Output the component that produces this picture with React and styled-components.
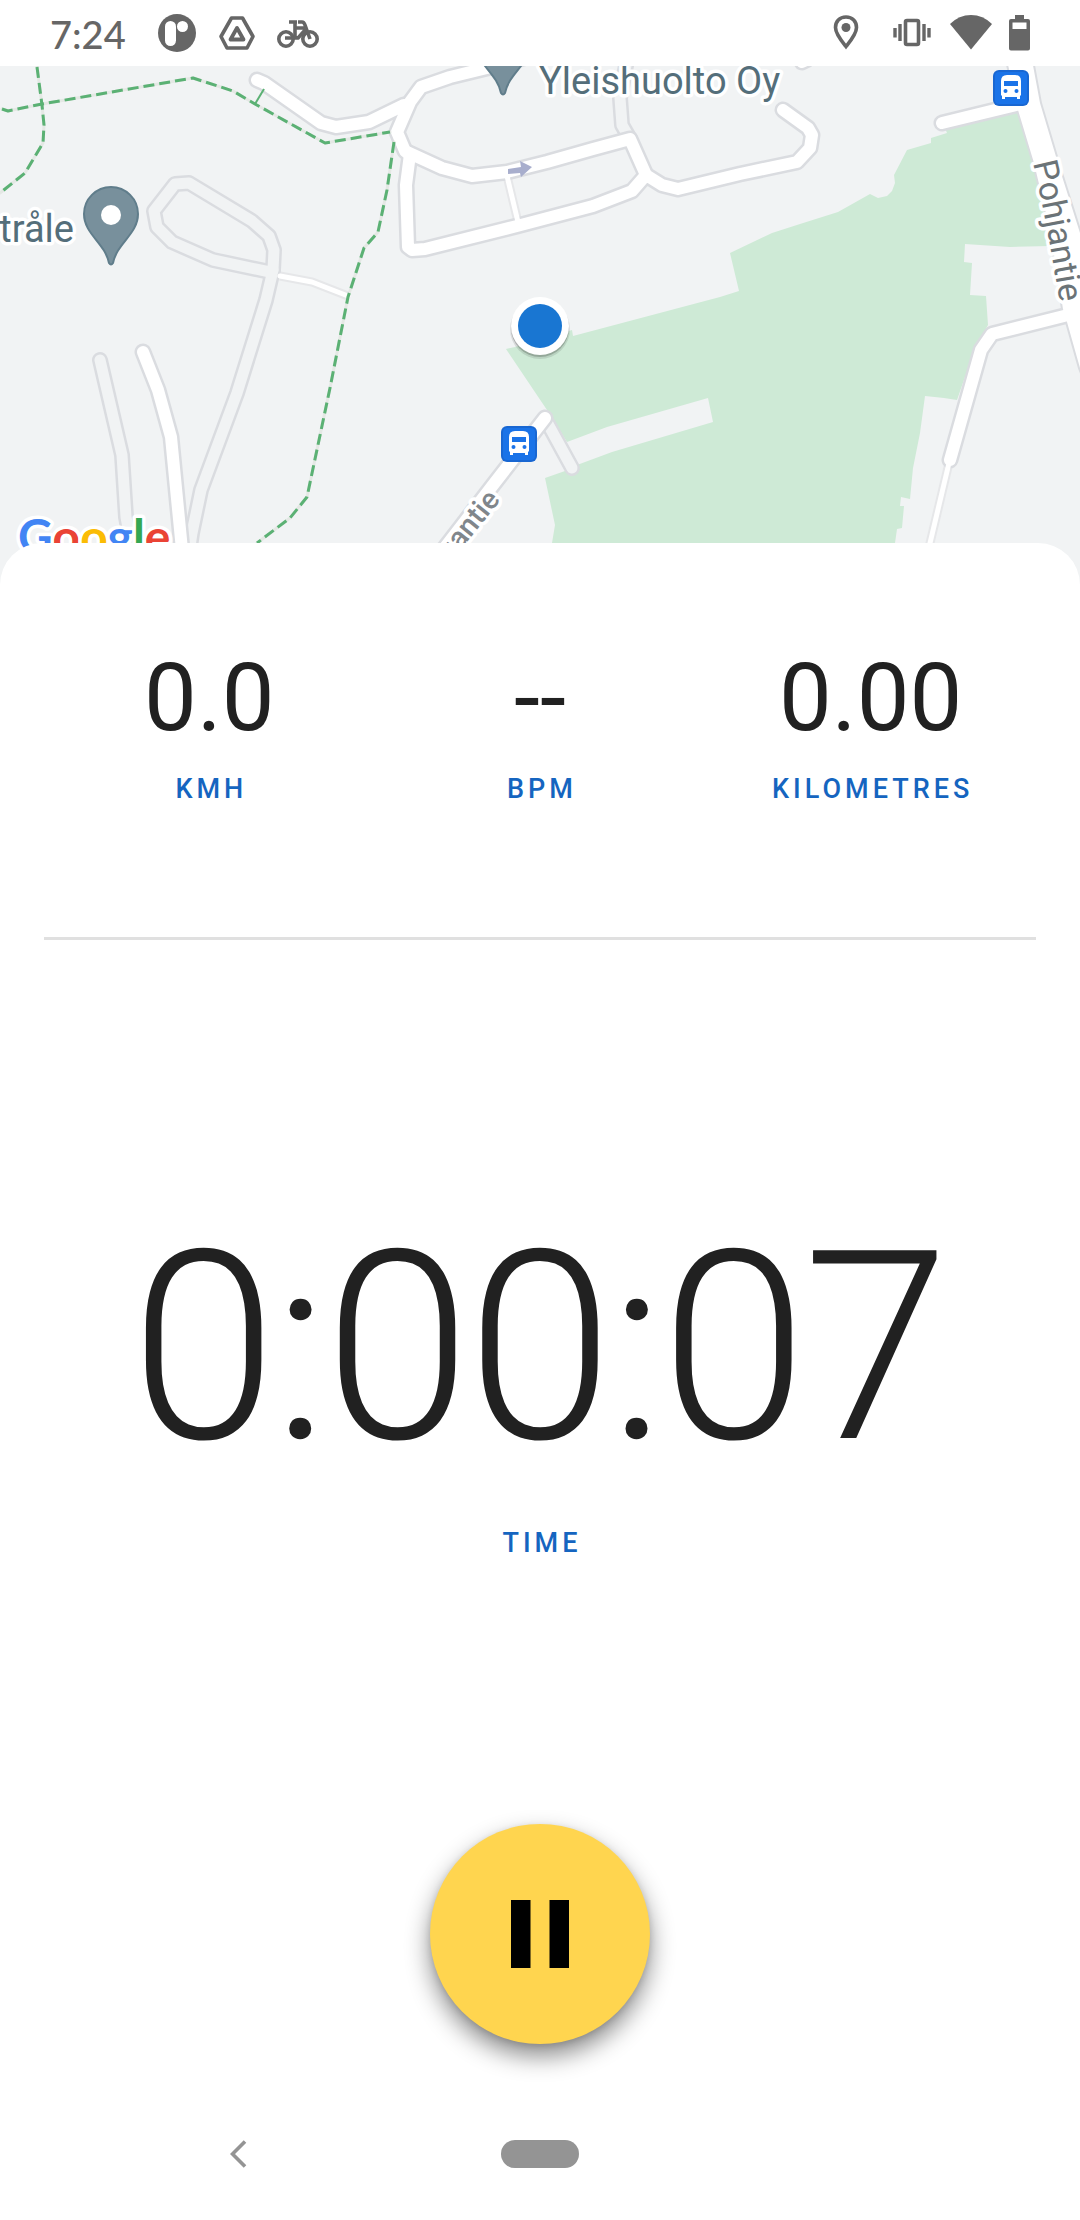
import React from "react";
import styled, { createGlobalStyle } from "styled-components";

const GlobalStyle = createGlobalStyle`
  *, *::before, *::after { box-sizing: border-box; }
  html, body { margin: 0; padding: 0; background: #fff; }
  body { font-family: Roboto, "Liberation Sans", sans-serif; }
`;

const Screen = styled.div`
  display: flex;
  flex-direction: column;
  min-height: 100vh;
  overflow-x: hidden;
`;

/* ---------- status bar ---------- */

const StatusBar = styled.header`
  display: flex;
  align-items: center;
  justify-content: space-between;
  height: 66px;
  padding: 0 50px;
  color: #666;
`;

const StatusGroup = styled.div`
  display: flex;
  align-items: center;
  gap: ${(p) => p.$gap}px;
`;

const Clock = styled.time`
  margin-right: 10px;
  padding-top: 2px;
  font-family: Lato, Roboto, sans-serif;
  font-size: 38px;
  line-height: 46px;
  font-weight: 500;
`;

const StatusIcon = styled.svg`
  display: block;
  width: ${(p) => p.$w}px;
  height: 38px;
  flex: none;
  overflow: visible;
`;

/* ---------- map ---------- */

const MapArea = styled.section`
  height: 519px;
  background: #f1f3f4;
  overflow: hidden;
`;

const MapCanvas = styled.svg`
  display: block;
  width: 100%;
  height: 100%;
  font-family: Roboto, "Liberation Sans", sans-serif;
`;

/* ---------- sheet ---------- */

const Sheet = styled.main`
  position: relative;
  display: flex;
  flex-direction: column;
  flex: 1;
  margin-top: -42px;
  background: #fff;
  border-radius: 42px 42px 0 0;
`;

const Stats = styled.dl`
  display: grid;
  grid-template-columns: repeat(3, 1fr);
  margin: 0 44px;
  padding: 100px 0 132px;
  border-bottom: 3px solid #e0e0e0;
`;

const Metric = styled.div`
  display: flex;
  flex-direction: column-reverse;
  align-items: center;
  gap: 20px;
`;

const Label = styled.dt`
  padding-left: 4px;
  color: #1565c0;
  font-size: 27px;
  line-height: 32px;
  font-weight: 500;
  letter-spacing: 4px;
`;

const Value = styled.dd`
  margin: 0;
  color: #212121;
  font-size: 94px;
  line-height: 110px;
`;

const Timer = styled.dl`
  display: flex;
  flex-direction: column;
  justify-content: center;
  flex: 1;
  margin: 0;
  padding-bottom: 12px;
`;

const TimerMetric = styled(Metric)`
  gap: 24px;
`;

const TimerValue = styled(Value)`
  padding-right: 4px;
  font-size: 264px;
  line-height: 310px;
  font-weight: 300;
  letter-spacing: -4px;
`;

const Controls = styled.div`
  display: flex;
  justify-content: center;
  padding-bottom: 44px;
`;

const PauseButton = styled.button`
  display: grid;
  place-items: center;
  width: 220px;
  height: 220px;
  padding: 0;
  border: 0;
  border-radius: 50%;
  background: #ffd54f;
  color: #000;
  box-shadow: 0 12px 24px rgba(0, 0, 0, 0.46), 0 2px 6px rgba(0, 0, 0, 0.12);
  cursor: pointer;
`;

/* ---------- navigation bar ---------- */

const NavBar = styled.nav`
  display: grid;
  grid-template-columns: 1fr 78px 1fr;
  align-items: center;
  height: 132px;
  color: #949494;
`;

const NavButton = styled.button`
  display: grid;
  place-items: center;
  justify-self: center;
  height: 80px;
  padding: 0 24px;
  border: 0;
  background: none;
  color: inherit;
`;

const BackButton = styled(NavButton)`
  margin-right: 24px;
`;

const HomeButton = styled(NavButton)`
  width: 78px;
  height: 28px;
  border-radius: 14px;
  background: currentColor;
`;

/* ---------- map data ---------- */

const PARK =
  "506,349 515,347 572,330 573,336 720,297 739,291 730,253 772,233 800,224 838,212 870,194 878,198 887,196 892,191 895,183 894,175 907,150 931,143 931,138 947,133 945,128 1017,110 1034,163 1046,215 1050,246 1010,247 965,244 964,262 972,263 970,295 986,296 988,325 975,348 957,400 944,398 925,396 920,433 913,468 910,499 901,497 900,506 904,506 902,528 897,529 895,543 895,590 552,590 552,543 555,525 545,478 565,471 577,465 612,452 713,422 708,398 607,427 567,442 547,410";

const SERVICE_ROADS = [
  "627,60 620,98 622,125 630,139",
  "273,270 274,250 269,236 252,221 189,183 175,184 154,211 157,227 172,242 213,260 270,272",
  "273,270 266,300 237,393 201,490 192,533 188,560",
  "100,360 122,455 126,517 134,560",
  "548,424 572,468",
];

const STREETS = [
  "257,80 264,83 321,123 336,127 369,122 404,105",
  "527,57 487,68 450,77 421,87 410,102 397,132 405,151 412,156",
  "407,152 442,168 472,176 507,172 547,162 593,149 630,139 646,175",
  "410,154 406,185 408,247 412,250 425,249 517,226 593,206 632,191 646,175 662,185 678,189 740,174 797,162 810,148 812,135 808,128 783,110",
  "143,352 158,390 171,437 183,560",
  "545,418 493,485 440,554",
  "942,123 1020,104",
  "1068,315 992,334 981,350 950,460",
  "806,60 802,62",
];

const PATHS = ["507,176 518,222", "280,276 312,282 348,296", "949,463 926,560"];

const TRAILS = [
  "37,67 42,105 44,125 43,143 25,173 0,193",
  "2,109 8,111 42,104 193,78 233,91 255,104 325,143 390,132",
  "394,142 387,190 378,232 364,248 348,297 330,388 307,497 290,518 257,543",
];

const AVENUE =
  "1007,60 1018,110 1034,163 1050,230 1063,309 1067,322 1080,368 1100,420 1100,290 1080,233 1060,170 1040,103 1032,60";

function Polylines({ lines, stroke, width, cap = "round", dash }) {
  return (
    <g
      fill="none"
      stroke={stroke}
      strokeWidth={width}
      strokeLinecap={cap}
      strokeLinejoin="round"
      strokeDasharray={dash}
    >
      {lines.map((points) => (
        <polyline key={points} points={points} />
      ))}
    </g>
  );
}

function PlacePin({ x, y }) {
  return (
    <g transform={`translate(${x} ${y})`}>
      <path
        d="M0-51a27 27 0 0 1 27 27C27-4 6 5 2 25q-2 3-4 0C-6 5-27-4-27-24A27 27 0 0 1 0-51Z"
        transform="translate(0 -1)"
        fill="#78909c"
        stroke="#607d8b"
        strokeWidth="2"
      />
      <circle cy="-24" r="10" fill="#fff" />
    </g>
  );
}

function BusStop({ x, y }) {
  return (
    <g transform={`translate(${x} ${y})`}>
      <rect width="36" height="36" rx="6" fill="#1967d2" />
      <rect x="2" y="2" width="32" height="32" rx="4" fill="#1a73e8" />
      <path
        d="M8 11q0-6 6-6h8q6 0 6 6v14l-1 1v3h-3v-2H12v2H9v-3l-1-1Z"
        fill="#fff"
      />
      <rect x="11" y="11" width="14" height="5" fill="#1a73e8" />
      <circle cx="12.500" cy="21" r="2" fill="#1a73e8" />
      <circle cx="23.500" cy="21" r="2" fill="#1a73e8" />
    </g>
  );
}

function RouteMap() {
  const halo = {
    stroke: "#fff",
    strokeWidth: 7,
    strokeLinejoin: "round",
    paintOrder: "stroke",
  };
  return (
    <MapCanvas
      viewBox="0 66 1080 519"
      preserveAspectRatio="xMidYMin slice"
      role="img"
      aria-label="Map"
    >
      <polygon points={PARK} fill="#ceead6" />

      <Polylines lines={PATHS} stroke="#e6e7e9" width={9} cap="butt" />
      <Polylines lines={SERVICE_ROADS} stroke="#dadce0" width={16} />
      <Polylines lines={SERVICE_ROADS} stroke="#f1f3f4" width={11} />
      <Polylines lines={STREETS} stroke="#dadce0" width={17} />
      <polygon points={AVENUE} fill="#fff" stroke="#dadce0" strokeWidth="4" />
      <Polylines lines={STREETS} stroke="#fff" width={12} />
      <polygon points={AVENUE} fill="#fff" />
      <Polylines lines={PATHS} stroke="#fff" width={5} />

      <Polylines lines={TRAILS} stroke="#e4e8e4" width={3} />
      <Polylines lines={TRAILS} stroke="#5bb174" width={3} cap="butt" dash="11 5" />
      <path d="M255 104 264 89" stroke="#5bb174" strokeWidth="2" />

      <path d="m508 169 13-2-1-6 12 6-11 10-1-4-12 1Z" fill="#a8aecd" />

      <PlacePin x={111} y={239} />
      <PlacePin x={503} y={69} />

      <g fill="#546e7a" fontSize="38" {...halo}>
        <text x="539" y="94">Yleishuolto Oy</text>
        <text x="74" y="242" textAnchor="end">tråle</text>
      </g>

      <path id="avenue-name" d="M1033 163Q1046 216 1063 322" fill="none" />
      <text fill="#6b7377" fontSize="34" {...halo}>
        <textPath href="#avenue-name">Pohjantie</textPath>
      </text>
      <text
        transform="translate(501 500) rotate(-51)"
        textAnchor="end"
        fill="#80868b"
        fontSize="29"
        fontWeight="500"
        {...halo}
      >
        gantie
      </text>

      <BusStop x={993} y={70} />
      <BusStop x={501} y={426} />

      <circle cx="540" cy="329" r="30" fill="#000" opacity="0.1" />
      <circle cx="540" cy="328" r="29" fill="#000" opacity="0.2" />
      <circle cx="540" cy="326" r="29" fill="#fff" />
      <circle cx="540" cy="326" r="22" fill="#1976d2" />

      <text x="18" y="554" fontFamily="Lato, sans-serif" fontSize="48" fontWeight="700" {...halo}>
        <tspan fill="#4285f4">G</tspan>
        <tspan fill="#ea4335">o</tspan>
        <tspan fill="#fbbc05">o</tspan>
        <tspan fill="#4285f4">g</tspan>
        <tspan fill="#34a853">l</tspan>
        <tspan fill="#ea4335">e</tspan>
      </text>
    </MapCanvas>
  );
}

/* ---------- status icons ---------- */

const ParkingAppIcon = () => (
  <StatusIcon $w={38} viewBox="0 0 38 38" aria-hidden="true">
    <circle cx="19" cy="19" r="19" fill="currentColor" />
    <rect x="7" y="7" width="11" height="25" rx="5.500" fill="#fff" />
    <circle cx="24.500" cy="12.500" r="5.500" fill="#fff" />
  </StatusIcon>
);

const DriveIcon = () => (
  <StatusIcon $w={37} viewBox="-1 0 37 38" aria-hidden="true">
    <g fill="none" stroke="currentColor" strokeLinejoin="round">
      <path d="M12.500 4h11L34 22.500 28 34H8L2 22.500Z" strokeWidth="3.600" />
      <path d="M18 14 11.500 25.500h13Z" strokeWidth="3.800" />
    </g>
  </StatusIcon>
);

const BikeIcon = () => (
  <StatusIcon $w={42} viewBox="0 0 42 38" aria-hidden="true">
    <g fill="none" stroke="currentColor" strokeWidth="3.600" strokeLinejoin="round">
      <circle cx="9" cy="25" r="7.200" />
      <circle cx="33" cy="25" r="7.200" />
      <path d="M21 8h4q2 0 3 3l5 14M12 8h8M18 8v14l3 2 8-9M19 14h10M8 24h13" />
    </g>
  </StatusIcon>
);

const LocationIcon = () => (
  <StatusIcon $w={26} viewBox="0 0 26 38" aria-hidden="true">
    <path
      d="M13 3C6.500 3 2.500 7.500 2.500 13.500 2.500 20 9 27.500 13 32.500c4-5 10.500-12.500 10.500-19C23.500 7.500 19.500 3 13 3Z"
      fill="none"
      stroke="currentColor"
      strokeWidth="3.600"
    />
    <circle cx="13" cy="13.500" r="4.500" fill="currentColor" />
  </StatusIcon>
);

const VibrateIcon = () => (
  <StatusIcon $w={40} viewBox="0 0 40 38" aria-hidden="true">
    <rect x="12.500" y="6.500" width="13" height="24" rx="1.500" fill="none" stroke="currentColor" strokeWidth="3.600" />
    <path d="M7 10v17M31 10v17M2 14v9.500M36 14v9.500" stroke="currentColor" strokeWidth="3.400" />
  </StatusIcon>
);

const WifiIcon = () => (
  <StatusIcon $w={42} viewBox="0 0 42 38" aria-hidden="true">
    <path d="M0 10Q9 1 21 1t21 9L21 35.500Z" fill="currentColor" />
  </StatusIcon>
);

const BatteryIcon = () => (
  <StatusIcon $w={21} viewBox="0 0 21 38" aria-hidden="true">
    <path
      fillRule="evenodd"
      d="M6 1h9v4h4q2 0 2 2v27.500q0 2-2 2H2q-2 0-2-2V7q0-2 2-2h4ZM3.500 8.500V15h14V8.500Z"
      fill="currentColor"
    />
  </StatusIcon>
);

/* ---------- page ---------- */

const METRICS = [
  { label: "KMH", value: "0.0" },
  { label: "BPM", value: "--" },
  { label: "KILOMETRES", value: "0.00" },
];

export default function App() {
  return (
    <Screen>
      <GlobalStyle />
      <StatusBar>
        <StatusGroup $gap={22}>
          <Clock>7:24</Clock>
          <ParkingAppIcon />
          <DriveIcon />
          <BikeIcon />
        </StatusGroup>
        <StatusGroup $gap={34}>
          <LocationIcon />
          <StatusGroup $gap={17}>
            <VibrateIcon />
            <WifiIcon />
            <BatteryIcon />
          </StatusGroup>
        </StatusGroup>
      </StatusBar>

      <MapArea>
        <RouteMap />
      </MapArea>

      <Sheet>
        <Stats>
          {METRICS.map((metric) => (
            <Metric key={metric.label}>
              <Label>{metric.label}</Label>
              <Value>{metric.value}</Value>
            </Metric>
          ))}
        </Stats>

        <Timer>
          <TimerMetric>
            <Label>TIME</Label>
            <TimerValue>0:00:07</TimerValue>
          </TimerMetric>
        </Timer>

        <Controls>
          <PauseButton type="button" aria-label="Pause">
            <svg width="58" height="68" viewBox="0 0 58 68" aria-hidden="true">
              <path d="M0 0h19.500v68H0ZM38.500 0H58v68H38.500Z" fill="currentColor" />
            </svg>
          </PauseButton>
        </Controls>
      </Sheet>

      <NavBar>
        <BackButton type="button" aria-label="Back">
          <svg width="17" height="28" viewBox="0 0 17 28" aria-hidden="true">
            <path d="M15 1.500 2.500 14 15 26.500" fill="none" stroke="currentColor" strokeWidth="3.600" />
          </svg>
        </BackButton>
        <HomeButton type="button" aria-label="Home" />
      </NavBar>
    </Screen>
  );
}
